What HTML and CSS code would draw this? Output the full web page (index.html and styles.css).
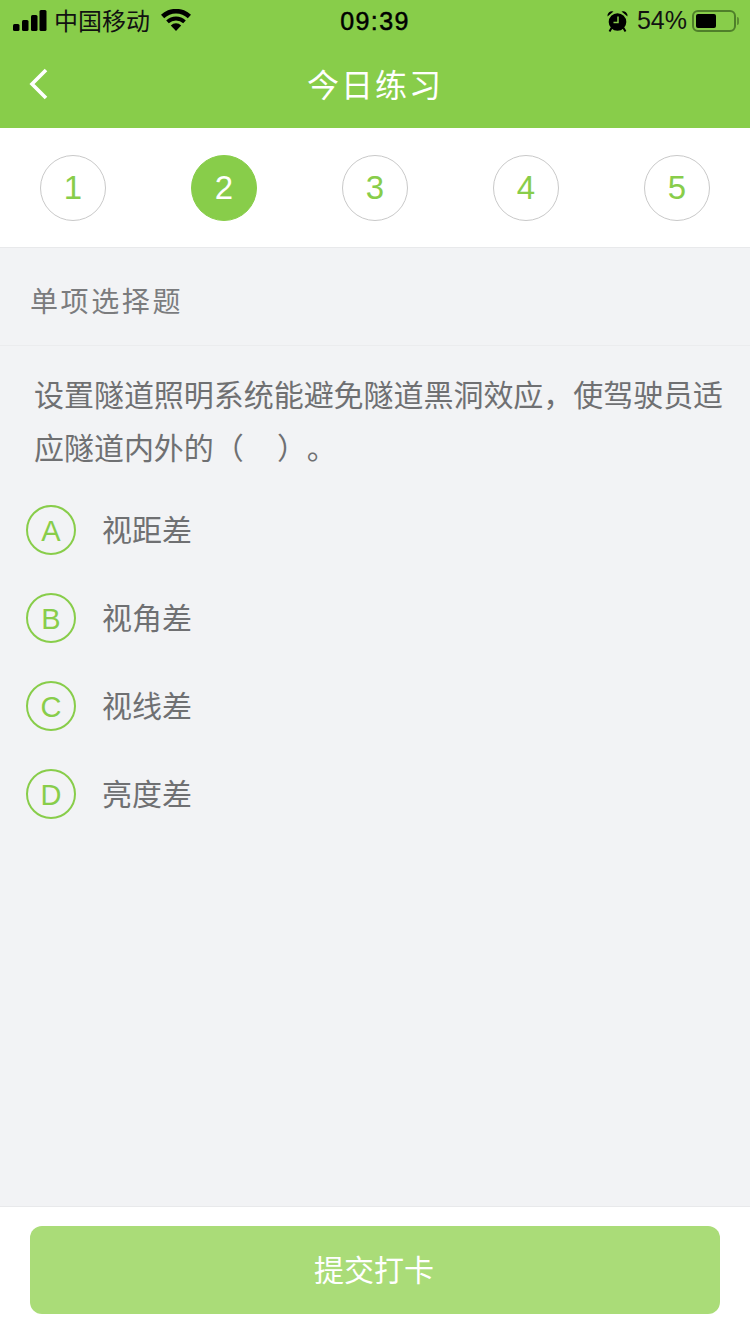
FILE: index.html
```html
<!DOCTYPE html>
<html lang="zh">
<head>
<meta charset="utf-8">
<title>今日练习</title>
<link rel="stylesheet" href="styles.css">
</head>
<body>
<div class="page">
  <header class="header">
    <div class="status">
      <div class="status-left">
        <svg class="signal" width="34" height="21" viewBox="0 0 34 21"><rect x="0" y="14" width="6.500" height="7" rx="1.500"/><rect x="9" y="10" width="6.500" height="11" rx="1.500"/><rect x="18" y="5" width="6.500" height="16" rx="1.500"/><rect x="26.500" y="0" width="7" height="21" rx="1.500"/></svg>
        <span class="carrier">中国移动</span>
        <svg class="wifi" width="30" height="22" viewBox="0 0 30 22"><path d="M15 22 9.800 16.400a7.600 7.600 0 0 1 10.400 0Z"/><path d="M7.800 14.200 5.200 11.400a14.400 14.400 0 0 1 19.600 0L22.200 14.200a10.600 10.600 0 0 0-14.400 0Z"/><path d="M3.200 9.200 0 5.800a21.800 21.800 0 0 1 30 0L26.800 9.200a17.200 17.200 0 0 0-23.600 0Z"/></svg>
      </div>
      <div class="time">09:39</div>
      <div class="status-right">
        <svg class="alarm" width="21" height="22" viewBox="0 0 21 22"><circle cx="10.500" cy="12" r="8.800"/><path d="M.5 6.500A4.500 4.500 0 0 1 6.500 1.500ZM20.500 6.500A4.500 4.500 0 0 0 14.500 1.500Z"/><path d="M4.500 18 2.500 21.500M16.500 18l2 3.500" stroke="#000" stroke-width="2" fill="none"/><path d="M11 6.500v6H6.500" stroke="#88cd4a" stroke-width="1.500" fill="none"/></svg>
        <span class="battery-text">54%</span>
        <div class="battery"><div class="battery-fill"></div></div>
        <div class="battery-cap"></div>
      </div>
    </div>
    <div class="nav">
      <svg class="back" width="20" height="32" viewBox="0 0 20 32"><path d="M17 2 3 16l14 14" fill="none" stroke="#fff" stroke-width="3.600"/></svg>
      <h1 class="title">今日练习</h1>
    </div>
  </header>

  <nav class="steps">
    <div class="step">1</div>
    <div class="step step-active">2</div>
    <div class="step">3</div>
    <div class="step">4</div>
    <div class="step">5</div>
  </nav>

  <main class="main">
    <div class="kind">单项选择题</div>
    <p class="question">设置隧道照明系统能避免隧道黑洞效应，使驾驶员适应隧道内外的（&nbsp;&nbsp;&nbsp;&nbsp;）。</p>
    <ul class="options">
      <li class="option"><span class="letter">A</span><span class="option-text">视距差</span></li>
      <li class="option"><span class="letter">B</span><span class="option-text">视角差</span></li>
      <li class="option"><span class="letter">C</span><span class="option-text">视线差</span></li>
      <li class="option"><span class="letter">D</span><span class="option-text">亮度差</span></li>
    </ul>
  </main>

  <footer class="footer">
    <button class="submit" type="button">提交打卡</button>
  </footer>
</div>
</body>
</html>
```
FILE: styles.css
```css
* { box-sizing: border-box; }
html, body { margin: 0; padding: 0; }
body {
  font-family: "Liberation Sans", "Noto Sans CJK SC", sans-serif;
  background: #f2f3f5;
}
.page {
  width: 750px;
  height: 1334px;
  display: flex;
  flex-direction: column;
  overflow: hidden;
}
.header { height: 128px; background: #88cd4a; flex: none; }
.status {
  height: 40px;
  padding: 0 11px 0 13px;
  display: grid;
  grid-template-columns: 1fr auto 1fr;
  align-items: center;
  color: #000;
}
.status-left { display: flex; align-items: center; }
.signal { fill: #000; margin-right: 7px; }
.carrier { font-size: 24px; color: #111; padding-bottom: 2px; }
.wifi { fill: #000; margin-left: 11px; }
.time { font-size: 25px; letter-spacing: 1.400px; padding: 2px 2px 0 0; -webkit-text-stroke: 0.5px #000; }
.status-right { display: flex; align-items: center; justify-content: flex-end; padding-top: 1px; }
.alarm { margin-right: 9px; }
.battery-text { font-size: 25px; color: #111; margin-right: 5px; }
.battery {
  width: 44px;
  height: 22px;
  border: 2px solid #4f7f2a;
  border-radius: 6px;
  padding: 2px;
}
.battery-fill { width: 20px; height: 14px; background: #000; border-radius: 2px; }
.battery-cap { width: 2px; height: 8px; margin: 0 0 0 1px; background: #5c8f30; border-radius: 0 2px 2px 0; }
.nav {
  height: 88px;
  display: flex;
  align-items: center;
  justify-content: center;
  position: relative;
}
.back { position: absolute; left: 29px; top: 28px; }
.title { margin: 0 0 2px; font-size: 32px; font-weight: 400; color: #fff; letter-spacing: 2px; }
.steps {
  height: 120px;
  flex: none;
  padding: 27px 40px 0;
  background: #fff;
  border-bottom: 1px solid #e8e9eb;
  display: flex;
  justify-content: space-between;
  align-items: flex-start;
}
.step {
  width: 66px;
  height: 66px;
  border: 1px solid #c9c9c9;
  border-radius: 50%;
  display: flex;
  align-items: center;
  justify-content: center;
  font-size: 33px;
  color: #88cd4a;
}
.step-active { background: #88cd4a; border-color: #88cd4a; color: #fff; }
.main { flex: 1; min-height: 0; }
.kind {
  height: 98px;
  padding: 7px 30px 0;
  display: flex;
  align-items: center;
  font-size: 28px;
  letter-spacing: 2.600px;
  color: #7b7c7e;
  border-bottom: 1px solid #ebecee;
}
.question {
  margin: 0;
  padding: 23px 20px 0 34px;
  font-size: 30px;
  line-height: 53px;
  letter-spacing: -0.040px;
  text-spacing-trim: space-all;
  color: #6f7072;
}
.options { list-style: none; margin: 11px 0 0; padding: 0 0 0 26px; }
.option { height: 88px; display: flex; align-items: center; }
.letter {
  width: 50px;
  height: 50px;
  flex: none;
  padding-top: 2px;
  border: 2px solid #88cd4a;
  border-radius: 50%;
  display: flex;
  align-items: center;
  justify-content: center;
  font-size: 29px;
  color: #88cd4a;
}
.option-text { margin-left: 26px; font-size: 30px; color: #6f7072; padding-bottom: 5px; }
.footer {
  height: 128px;
  flex: none;
  padding: 19px 30px 0;
  background: #fff;
  border-top: 1px solid #e8e9eb;
}
.submit {
  display: block;
  width: 100%;
  height: 88px;
  padding: 0 2px 4px 0;
  border: 0;
  border-radius: 12px;
  background: #aadc78;
  color: #fff;
  font-family: inherit;
  font-size: 30px;
}
```
